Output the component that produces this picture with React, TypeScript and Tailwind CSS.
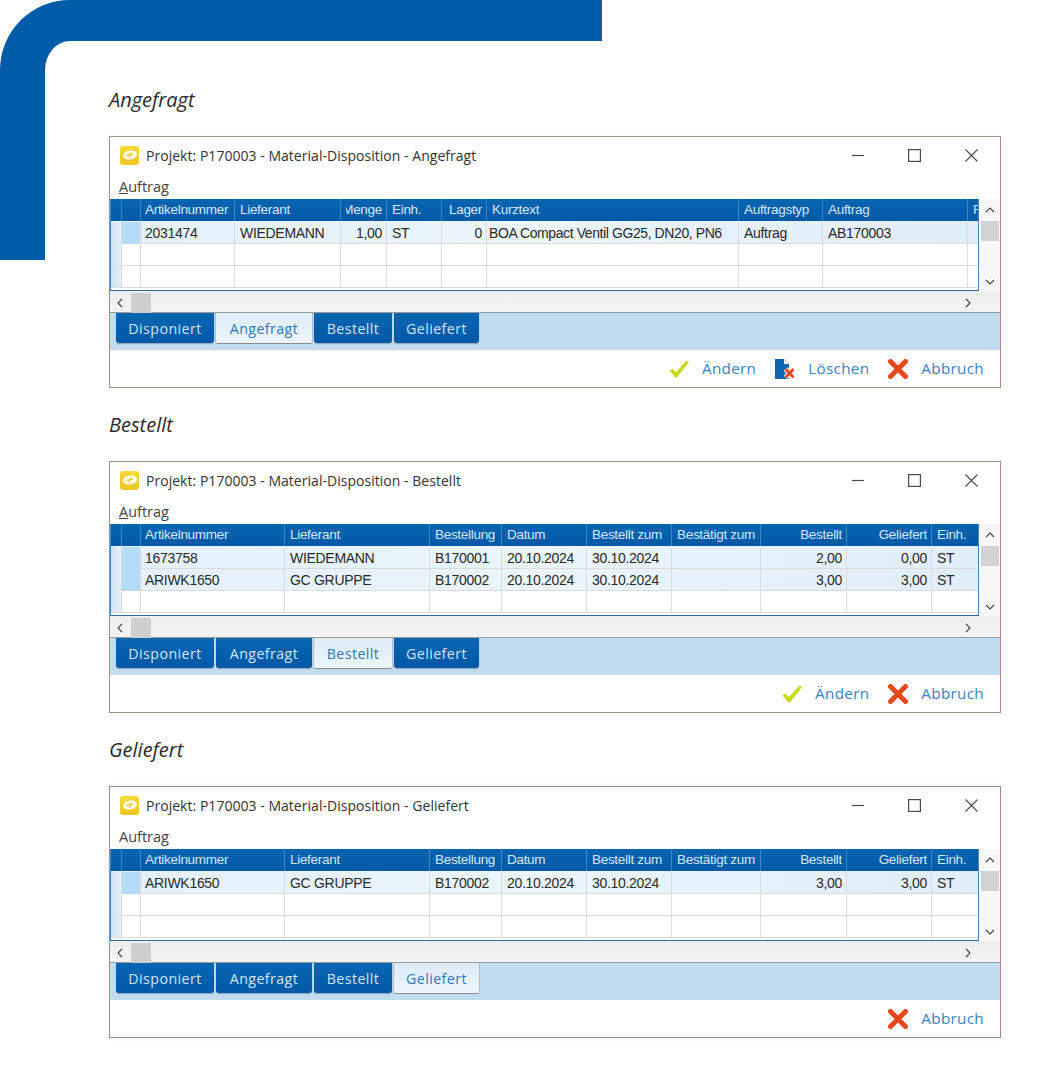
import React from 'react';

type Cell = { text?: string; right?: boolean; tight?: boolean };
type Row = Cell[];

const WIDE_COLS = 'grid-cols-[11px_19px_144px_145px_72px_85px_85px_89px_86px_85px_46px]';
const NARROW_COLS = 'grid-cols-[11px_19px_94px_106px_46px_55px_45px_252px_84px_145px_10px]';

const ORDER_HEAD: Row = [
  {},
  {},
  { text: 'Artikelnummer' },
  { text: 'Lieferant' },
  { text: 'Bestellung' },
  { text: 'Datum' },
  { text: 'Bestellt zum' },
  { text: 'Bestätigt zum' },
  { text: 'Bestellt', right: true },
  { text: 'Geliefert', right: true },
  { text: 'Einh.' },
];

const orderRow = (nr: string, supplier: string, order: string, qty: string, done: string): Row => [
  {},
  {},
  { text: nr },
  { text: supplier },
  { text: order },
  { text: '20.10.2024' },
  { text: '30.10.2024' },
  {},
  { text: qty, right: true },
  { text: done, right: true },
  { text: 'ST' },
];

const TABS = [
  { name: 'Disponiert', width: 'w-[98px]' },
  { name: 'Angefragt', width: 'w-[96px]' },
  { name: 'Bestellt', width: 'w-[78px]' },
  { name: 'Geliefert', width: 'w-[85px]' },
];

function LogoIcon() {
  return (
    <span className="flex h-[19px] w-[19px] items-center justify-center rounded-[3px] bg-gradient-to-b from-[#f6d93c] to-[#eec624]">
      <svg width="16" height="12" viewBox="0 0 16 12" fill="none">
        <ellipse cx="8" cy="6" rx="7" ry="4.4" fill="#ffffff" transform="rotate(-10 8 6)" />
        <path d="M3.5 6.4L11 5.2M9 3.6L7.2 9" stroke="#efc928" strokeWidth="1.4" />
      </svg>
    </span>
  );
}

function WindowButtons() {
  return (
    <div className="flex items-center gap-[44px] pr-[22px] text-[#4a4a4a]">
      <svg width="12" height="13" viewBox="0 0 12 13" fill="none">
        <path d="M0 6.5h12" stroke="currentColor" strokeWidth="1.2" />
      </svg>
      <svg width="13" height="13" viewBox="0 0 13 13" fill="none">
        <rect x="0.6" y="0.6" width="11.8" height="11.8" stroke="currentColor" strokeWidth="1.2" />
      </svg>
      <svg width="13" height="13" viewBox="0 0 13 13" fill="none">
        <path d="M0.5 0.5l12 12M12.5 0.5l-12 12" stroke="currentColor" strokeWidth="1.1" />
      </svg>
    </div>
  );
}

function GridCell({ cell, index, extra }: { cell: Cell; index: number; extra: string }) {
  const pad = cell.right ? 'pl-[5px] pr-[4px]' : cell.tight ? 'pl-[2px] tracking-[-0.41px]' : index === 2 ? 'pl-[4px]' : 'pl-[5px]';
  return (
    <div className={`flex items-center whitespace-nowrap border-r last:border-r-0 ${pad} ${extra}`}>
      <div className={`flex min-w-0 flex-1 overflow-hidden pt-[1px] ${cell.right ? 'justify-end' : ''}`}>
        <span className="shrink-0">{cell.text}</span>
      </div>
    </div>
  );
}

function HeaderRow({ cols, cells }: { cols: string; cells: Row }) {
  return (
    <div className={`grid h-[22px] ${cols} bg-gradient-to-b from-[#0a65b1] to-[#0059a7] font-['Liberation_Sans',sans-serif] text-[13.5px] tracking-[-0.3px] text-[#d3e6f6]`}>
      {cells.map((cell, i) => (
        <GridCell key={i} cell={cell} index={i} extra="border-[#3d86c4]" />
      ))}
    </div>
  );
}

function BodyRow({ cols, cells, height }: { cols: string; cells?: Row; height: string }) {
  const filled = !!cells;
  const list: Row = cells ?? Array.from({ length: 11 }, () => ({}));
  return (
    <div
      className={`grid ${height} ${cols} border-b border-[#dedad7] font-['Liberation_Sans',sans-serif] text-[14px] tracking-[-0.3px] text-[#2a2a2a] ${filled ? 'bg-gradient-to-r from-[#e4f1fb] via-[#eaf5fc] to-[#e0eefa]' : 'bg-white'}`}
    >
      {list.map((cell, i) => (
        <GridCell
          key={i}
          cell={cell}
          index={i}
          extra={`border-[#dedad7] ${i === 0 ? 'bg-gradient-to-r from-[#cfe2f3] to-[#e6f1fa]' : ''} ${i === 1 && filled ? 'bg-[#b4dcf6]' : ''}`}
        />
      ))}
    </div>
  );
}

function Chevron({ d }: { d: string }) {
  return (
    <svg width="10" height="10" viewBox="0 0 10 10" fill="none">
      <path d={d} stroke="#444444" strokeWidth="1.1" />
    </svg>
  );
}

function CheckIcon() {
  return (
    <svg width="20" height="18" viewBox="0 0 20 18" fill="none">
      <path d="M0.5 10.5L3.5 8.5L7 12L17.5 0.5L20 2L8 17.5H6.5z" fill="#c9d91b" />
    </svg>
  );
}

function CancelIcon() {
  return (
    <svg width="20" height="20" viewBox="0 0 20 20" fill="none">
      <path d="M2.5 2.5l15 15M17.5 2.5l-15 15" stroke="#e9481c" strokeWidth="5" strokeLinecap="round" />
    </svg>
  );
}

function DeleteIcon() {
  return (
    <svg width="20" height="20" viewBox="0 0 20 20" fill="none">
      <path d="M0 0h9l5 5v15H0z" fill="#0d66b4" />
      <path d="M9 0l5 5H9z" fill="#ffffff" />
      <path d="M10.5 10l8 8.5M18.5 10l-8 8.5" stroke="#ffffff" strokeWidth="5" />
      <path d="M10.5 10l8 8.5M18.5 10l-8 8.5" stroke="#e9481c" strokeWidth="2.8" />
    </svg>
  );
}

function Action({ icon, label }: { icon: React.ReactNode; label: string }) {
  return (
    <div className="flex items-center gap-[13px]">
      {icon}
      <span className="font-['Open_Sans',sans-serif] text-[15.25px] tracking-[0.3px] text-[#3a83c6]">{label}</span>
    </div>
  );
}

function MaterialWindow({
  state,
  cols,
  head,
  rows,
  actions,
  menuMnemonic = true,
}: {
  state: string;
  cols: string;
  head: Row;
  rows: Row[];
  actions: React.ReactNode;
  menuMnemonic?: boolean;
}) {
  return (
    <section className="flex h-[252px] flex-col border border-[#a38f86] bg-white shadow-[0_0_8px_rgba(0,0,0,0.05)]">
      <div className="flex h-[36px] items-center justify-between">
        <div className="flex items-center gap-[7px] pl-[10px]">
          <LogoIcon />
          <span className="font-['Open_Sans',sans-serif] text-[14px] tracking-[0.03px] text-[#333333]">
            Projekt: P170003 - Material-Disposition - {state}
          </span>
        </div>
        <WindowButtons />
      </div>
      <div className="flex h-[26px] items-center pl-[9px] pt-[1px] font-['Open_Sans',sans-serif] text-[14.5px] text-[#444444]">
        <span>
          <span className={menuMnemonic ? 'underline' : ''}>A</span>uftrag
        </span>
      </div>
      <div className="flex h-[92px]">
        <div className="h-[92px] w-[869px] overflow-hidden border-x border-b border-x-[#4a86bd] border-b-[#2c6aa5]">
          <HeaderRow cols={cols} cells={head} />
          {rows.map((row, i) => (
            <BodyRow key={i} cols={cols} cells={row} height={i === 0 ? 'h-[23px] pt-[1px]' : 'h-[22px]'} />
          ))}
          {Array.from({ length: 3 - rows.length }, (_, i) => (
            <BodyRow key={i} cols={cols} height="h-[22px]" />
          ))}
        </div>
        <div className="flex w-[21px] flex-col items-center bg-[#f7f7f7]">
          <div className="flex h-[22px] items-center">
            <Chevron d="M1 7l4-4 4 4" />
          </div>
          <div className="h-[20px] w-[18px] bg-[#d3d3d3]" />
          <div className="flex-1" />
          <div className="flex h-[19px] items-center">
            <Chevron d="M1 3l4 4 4-4" />
          </div>
        </div>
      </div>
      <div className="flex h-[22px] items-center bg-gradient-to-b from-[#eeeeee] to-[#f4f4f4] pl-[5px] pr-[27px] pt-[2px] shadow-[inset_0_-1px_0_#9a9a9a]">
        <Chevron d="M7 1L3 5l4 4" />
        <div className="ml-[6px] h-[20px] w-[20px] bg-[#cfcfcf]" />
        <div className="flex-1" />
        <Chevron d="M3 1l4 4-4 4" />
      </div>
      <div className="flex h-[37px] items-start gap-[2px] bg-[#c1dcee] pl-[6px]">
        {TABS.map((tab) => (
          <div
            key={tab.name}
            className={
              tab.name === state
                ? `flex h-[30px] ${tab.width} items-center justify-center rounded-b-[2px] bg-gradient-to-b from-[#dcecf8] to-[#edf6fc] pt-[1px] font-['Open_Sans',sans-serif] text-[14.25px] tracking-[0.4px] text-[#2c78c0] shadow-[0_1px_0_#8c8c8c,1px_0_0_#b4bcc2,-1px_0_0_#b4bcc2]`
                : `flex h-[30px] ${tab.width} items-center justify-center rounded-b-[3px] bg-gradient-to-b from-[#0a66b2] to-[#0058a6] pt-[1px] font-['Open_Sans',sans-serif] text-[14.25px] tracking-[0.4px] text-[#cfe4f5] shadow-[0_1px_1px_rgba(0,0,0,0.25)]`
            }
          >
            {tab.name}
          </div>
        ))}
      </div>
      <div className="flex flex-1 items-center justify-end gap-[19px] pr-[16px]">{actions}</div>
    </section>
  );
}

function Block({ title, children }: { title: string; children: React.ReactNode }) {
  return (
    <div className="flex flex-col gap-[17px]">
      <h2 className="flex h-[38px] items-center font-['Open_Sans',sans-serif] text-[20px] font-normal italic text-[#2b2b2b]">
        {title}
      </h2>
      {children}
    </div>
  );
}

export default function App() {
  return (
    <div className="grid h-[1090px] w-[1056px] bg-white">
      {/* blue corner frame behind the content */}
      <div className="col-start-1 row-start-1 h-[260px] w-[602px] rounded-tl-[70px] border-l-[45px] border-t-[41px] border-[#005ca9]" />
      <div className="col-start-1 row-start-1 flex flex-col gap-[18px] pl-[109px] pr-[55px] pt-[81px]">
        <Block title="Angefragt">
          <MaterialWindow
            state="Angefragt"
            cols={NARROW_COLS}
            head={[
              {},
              {},
              { text: 'Artikelnummer' },
              { text: 'Lieferant' },
              { text: 'Menge', right: true },
              { text: 'Einh.' },
              { text: 'Lager', right: true },
              { text: 'Kurztext' },
              { text: 'Auftragstyp' },
              { text: 'Auftrag' },
              { text: 'F' },
            ]}
            rows={[
              [
                {},
                {},
                { text: '2031474' },
                { text: 'WIEDEMANN' },
                { text: '1,00', right: true },
                { text: 'ST' },
                { text: '0', right: true },
                { text: 'BOA Compact Ventil GG25, DN20, PN6', tight: true },
                { text: 'Auftrag' },
                { text: 'AB170003' },
                {},
              ],
            ]}
            actions={
              <>
                <Action icon={<CheckIcon />} label="Ändern" />
                <Action icon={<DeleteIcon />} label="Löschen" />
                <Action icon={<CancelIcon />} label="Abbruch" />
              </>
            }
          />
        </Block>
        <Block title="Bestellt">
          <MaterialWindow
            state="Bestellt"
            cols={WIDE_COLS}
            head={ORDER_HEAD}
            rows={[
              orderRow('1673758', 'WIEDEMANN', 'B170001', '2,00', '0,00'),
              orderRow('ARIWK1650', 'GC GRUPPE', 'B170002', '3,00', '3,00'),
            ]}
            actions={
              <>
                <Action icon={<CheckIcon />} label="Ändern" />
                <Action icon={<CancelIcon />} label="Abbruch" />
              </>
            }
          />
        </Block>
        <Block title="Geliefert">
          <MaterialWindow
            state="Geliefert"
            cols={WIDE_COLS}
            head={ORDER_HEAD}
            rows={[orderRow('ARIWK1650', 'GC GRUPPE', 'B170002', '3,00', '3,00')]}
            menuMnemonic={false}
            actions={<Action icon={<CancelIcon />} label="Abbruch" />}
          />
        </Block>
      </div>
    </div>
  );
}
